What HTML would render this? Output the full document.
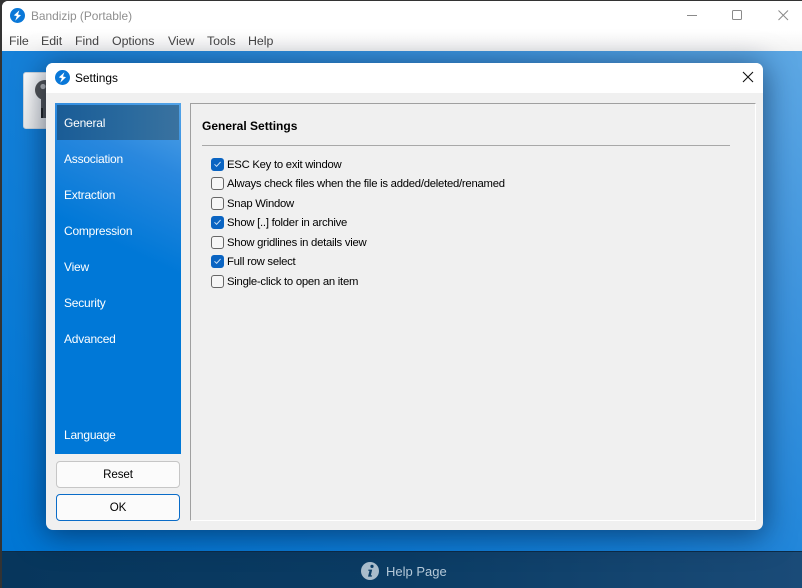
<!DOCTYPE html>
<html>
<head>
<meta charset="utf-8">
<style>
html,body{margin:0;padding:0;width:802px;height:588px;overflow:hidden;background:#333}
*{box-sizing:border-box}
body{font-family:"Liberation Sans",sans-serif;font-size:12px;color:#000;position:relative}
.abs{position:absolute}
.t{position:absolute;white-space:nowrap;line-height:16px}
#win{position:absolute;left:2px;top:1px;width:800px;height:587px;background:#fff;border-top-left-radius:6px;overflow:hidden}
#bar{position:absolute;left:0;top:0;width:800px;height:50px;background:linear-gradient(180deg,#fff 0,#fff 30px,#f4f4f4 49px)}
#blue{position:absolute;left:0;top:50px;width:800px;height:500px;background:linear-gradient(218deg,#5ea8e4 0%,#3f95de 22%,#1580d8 55%,#0076d4 100%);overflow:hidden}
#foot{position:absolute;left:0;top:550px;width:800px;height:37px;background:linear-gradient(90deg,#07365c,#0b3c64 50%,#1a4b78);border-top:1px solid #0c2c48}
.menu{color:#444;font-size:12.4px;top:33px;letter-spacing:-.05px}
#dlg{position:absolute;left:46px;top:63px;width:717px;height:467px;background:#f0f0f0;border-radius:7px;box-shadow:0 4px 30px 2px rgba(0,20,50,.55);overflow:hidden}
#dt{position:absolute;left:0;top:0;width:717px;height:30px;background:#fff}
#side{position:absolute;left:9px;top:40px;width:126px;height:351px;background:linear-gradient(205deg,#54a4e8 0%,#2a88de 18%,#0078d7 42%,#0078d7 100%)}
#sel{position:absolute;left:2px;top:2px;width:122px;height:35px;background:linear-gradient(90deg,#1a5c96,#2a6a9e 60%,#3a729f)}
.si{color:#fff;font-size:12px;left:9px;letter-spacing:-.22px}
#panel{position:absolute;left:144px;top:40px;width:566px;height:418px;border-left:1px solid #a0a0a0;border-top:1px solid #a0a0a0;border-right:1px solid #fff;border-bottom:1px solid #fff}
.btn{position:absolute;left:10px;width:124px;height:27px;background:#fbfbfb;border:1px solid #c6c6c6;border-radius:4px;text-align:center;line-height:25px;font-size:11.6px;letter-spacing:-.1px}
.cb{position:absolute;left:165px;width:13px;height:13px;border-radius:3px;border:1px solid #666;background:#f6f6f6}
.cb.on{background:#0a64c2;border-color:#0a64c2}
.cb svg{position:absolute;left:0;top:0}
.lb{position:absolute;left:181px;white-space:nowrap;line-height:16px;font-size:11.3px;letter-spacing:-.25px;color:#000}
</style>
</head>
<body>
<div id="win">
  <div id="bar"></div>
  <div id="blue"></div>
  <div id="foot"></div>
</div>

<svg class="abs" style="left:10px;top:8px" width="15" height="15" viewBox="0 0 15 15"><circle cx="7.5" cy="7.5" r="7.5" fill="#0a78d8"/><path d="M9.4 2.2 3.8 7.4l3 .7-1.6 4.6 5.8-5.6-3-.6z" fill="#fff"/></svg>
<div class="t" style="left:31px;top:8px;color:#8f8f8f;font-size:11.9px">Bandizip (Portable)</div>
<div class="t menu" style="left:9px">File</div>
<div class="t menu" style="left:41px">Edit</div>
<div class="t menu" style="left:75px">Find</div>
<div class="t menu" style="left:112px">Options</div>
<div class="t menu" style="left:168px">View</div>
<div class="t menu" style="left:207px">Tools</div>
<div class="t menu" style="left:248px">Help</div>

<svg class="abs" style="left:680px;top:5px" width="122" height="22" viewBox="0 0 122 22"><path d="M7 10.5h10" stroke="#8a8a8a" fill="none"/><rect x="52.5" y="5.5" width="9" height="9" rx="1" stroke="#8a8a8a" fill="none"/><path d="M98.5 5.5l9.5 9.5M108 5.5l-9.5 9.5" stroke="#8a8a8a" fill="none"/></svg>

<!-- key tile -->
<div class="abs" style="left:23px;top:72px;width:40px;height:57px;background:linear-gradient(135deg,#fff,#e4e4e4);border:1px solid #cfd8e0;border-radius:3px"></div>
<svg class="abs" style="left:33px;top:78px" width="16" height="42" viewBox="0 0 16 42"><circle cx="12" cy="12" r="10" fill="#555"/><rect x="8" y="18" width="8" height="22" fill="#555"/><rect x="8" y="30" width="2" height="10" fill="#222"/><circle cx="10" cy="8.5" r="2.6" fill="#bbb"/></svg>

<div id="dlg">
  <div id="dt"></div>
  <svg class="abs" style="left:9px;top:7px" width="15" height="15" viewBox="0 0 15 15"><circle cx="7.5" cy="7.5" r="7.5" fill="#0a78d8"/><path d="M9.4 2.2 3.8 7.4l3 .7-1.6 4.6 5.8-5.6-3-.6z" fill="#fff"/></svg>
  <div class="t" style="left:29px;top:7px;font-size:11.9px">Settings</div>
  <svg class="abs" style="left:696px;top:8px" width="12" height="12" viewBox="0 0 12 12"><path d="M1 1l10 10M11 1 1 11" stroke="#111" stroke-width="1.1" fill="none"/></svg>

  <div id="side">
    <div id="sel"></div>
    <div class="t si" style="top:12px">General</div>
    <div class="t si" style="top:48px">Association</div>
    <div class="t si" style="top:84px">Extraction</div>
    <div class="t si" style="top:120px">Compression</div>
    <div class="t si" style="top:156px">View</div>
    <div class="t si" style="top:192px">Security</div>
    <div class="t si" style="top:228px">Advanced</div>
    <div class="t si" style="top:324px">Language</div>
  </div>
  <div class="btn" style="top:398px">Reset</div>
  <div class="btn" style="top:431px;border-color:#0a6cc8">OK</div>

  <div id="panel"></div>
  <div class="t" style="left:156px;top:55px;font-weight:bold;font-size:12px">General Settings</div>
  <div class="abs" style="left:156px;top:82px;width:528px;height:1px;background:#a8a8a8"></div>

  <div class="cb on" style="top:95px"><svg width="11" height="11" viewBox="0 0 11 11"><path d="M2.5 5.3 4.6 7.3 8.6 2.9" stroke="#cfe4f8" fill="none"/></svg></div>
  <div class="lb" style="top:94px">ESC Key to exit window</div>
  <div class="cb" style="top:114px"></div>
  <div class="lb" style="top:113px">Always check files when the file is added/deleted/renamed</div>
  <div class="cb" style="top:134px"></div>
  <div class="lb" style="top:133px">Snap Window</div>
  <div class="cb on" style="top:153px"><svg width="11" height="11" viewBox="0 0 11 11"><path d="M2.5 5.3 4.6 7.3 8.6 2.9" stroke="#cfe4f8" fill="none"/></svg></div>
  <div class="lb" style="top:152px">Show [..] folder in archive</div>
  <div class="cb" style="top:173px"></div>
  <div class="lb" style="top:172px">Show gridlines in details view</div>
  <div class="cb on" style="top:192px"><svg width="11" height="11" viewBox="0 0 11 11"><path d="M2.5 5.3 4.6 7.3 8.6 2.9" stroke="#cfe4f8" fill="none"/></svg></div>
  <div class="lb" style="top:191px">Full row select</div>
  <div class="cb" style="top:212px"></div>
  <div class="lb" style="top:211px">Single-click to open an item</div>
</div>

<svg class="abs" style="left:361px;top:562px" width="18" height="18" viewBox="0 0 18 18"><circle cx="9" cy="9" r="9" fill="#a9bccb"/><circle cx="11" cy="4.4" r="1.6" fill="#0b3c64"/><path d="M7.4 7.6h3.8L9.8 13.4h1.3l-.3 1.2H7l1.5-5.9H7.2z" fill="#0b3c64"/></svg>
<div class="t" style="left:386px;top:564px;color:#b4c8d8;font-size:13px">Help Page</div>
</body>
</html>
